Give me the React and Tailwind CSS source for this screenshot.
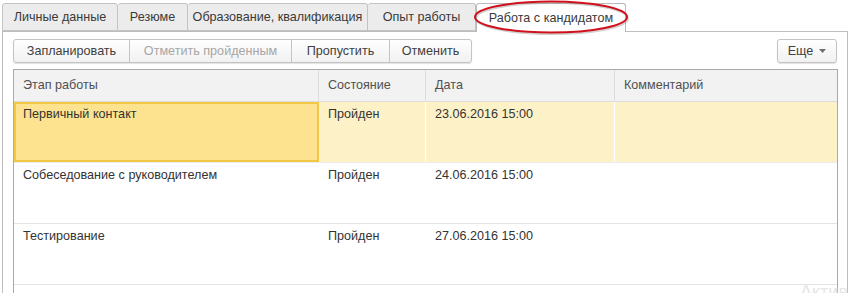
import React from "react";

const tabs = [
  { label: "Личные данные", w: 116 },
  { label: "Резюме", w: 70 },
  { label: "Образование, квалификация", w: 180 },
  { label: "Опыт работы", w: 108 },
];

const rows = [
  { stage: "Первичный контакт", state: "Пройден", date: "23.06.2016 15:00", comment: "" },
  { stage: "Собеседование с руководителем", state: "Пройден", date: "24.06.2016 15:00", comment: "" },
  { stage: "Тестирование", state: "Пройден", date: "27.06.2016 15:00", comment: "" },
];

const Tab = ({ label, w, active }) => (
  <div
    className={
      active
        ? "h-[29px] -mb-px bg-white border border-[#b9b9b9] border-b-0 rounded-t-[3px] flex items-center justify-center text-[#3a3a3a] relative z-10 whitespace-nowrap"
        : "h-[28px] bg-[#ececec] border border-[#c3c3c3] border-l-0 first:border-l rounded-t-[3px] flex items-center justify-center text-[#3a3a3a] whitespace-nowrap"
    }
    style={{ width: w }}
  >
    {label}
  </div>
);

const App = () => {
  return (
    <div
      className="relative w-[852px] h-[293px] overflow-hidden bg-white text-[12.6px] text-[#404040]"
      style={{ fontFamily: '"Liberation Sans", Arial, sans-serif' }}
    >
      <div className="flex items-end pl-[2px] pt-[2px] h-[31px]">
        {tabs.map((t) => (
          <Tab key={t.label} label={t.label} w={t.w} />
        ))}
        <Tab label="Работа с кандидатом" w={150} active />
      </div>

      <div className="ml-[2px] w-[846px] h-[270px] border border-[#bdbdbd] border-b-0 px-[10px] pt-[7px]">
        <div className="flex justify-between h-[24px]">
          <div className="flex border border-[#c4c4c4] rounded-[3px] shadow-[0_1px_1px_rgba(0,0,0,0.12)] bg-gradient-to-b from-white to-[#f1f1f1] overflow-hidden">
            <div className="w-[116px] flex items-center justify-center border-r border-[#c4c4c4] text-[#404040]">
              Запланировать
            </div>
            <div className="w-[162px] flex items-center justify-center border-r border-[#c4c4c4] text-[#a6a6a6]">
              Отметить пройденным
            </div>
            <div className="w-[98px] flex items-center justify-center border-r border-[#c4c4c4] text-[#404040]">
              Пропустить
            </div>
            <div className="w-[81px] flex items-center justify-center text-[#404040]">
              Отменить
            </div>
          </div>
          <div className="w-[60px] flex items-center justify-center gap-[6px] border border-[#c4c4c4] rounded-[3px] shadow-[0_1px_1px_rgba(0,0,0,0.12)] bg-gradient-to-b from-white to-[#f1f1f1] text-[#404040]">
            <span>Еще</span>
            <svg width="7" height="4" viewBox="0 0 7 4">
              <path d="M0 0h7L3.5 4z" fill="#707070" />
            </svg>
          </div>
        </div>

        <div className="mt-[6px] w-[825px] h-[240px] border border-[#a9a9a9] border-b-0">
          <div className="grid grid-cols-[305px_107px_189px_1fr] h-[32px] bg-[#f2f2f2] border-b border-[#dcdcdc] text-[#505050]">
            <div className="flex items-center pl-[9px] border-r border-[#dcdcdc]">Этап работы</div>
            <div className="flex items-center pl-[9px] border-r border-[#dcdcdc]">Состояние</div>
            <div className="flex items-center pl-[9px] border-r border-[#dcdcdc]">Дата</div>
            <div className="flex items-center pl-[9px]">Комментарий</div>
          </div>

          {rows.map((r, i) => {
            const sel = i === 0;
            return (
              <div
                key={r.stage}
                className={
                  sel
                    ? "grid grid-cols-[305px_107px_189px_1fr] h-[61px] bg-[#fdf1c8] border-b border-[#ececec] text-[#333]"
                    : "grid grid-cols-[305px_107px_189px_1fr] h-[61px] border-b border-[#e3e3e3] text-[#333]"
                }
              >
                <div
                  className={
                    sel
                      ? "pl-[7px] pt-[1px] bg-[#fde38f] border-2 border-[#f2c744]"
                      : "pl-[9px] pt-[3px]"
                  }
                >
                  {r.stage}
                </div>
                <div className={sel ? "pl-[9px] pt-[3px] border-r border-white" : "pl-[9px] pt-[3px]"}>
                  {r.state}
                </div>
                <div className={sel ? "pl-[9px] pt-[3px] border-r border-white" : "pl-[9px] pt-[3px]"}>
                  {r.date}
                </div>
                <div className="pl-[9px] pt-[3px]">{r.comment}</div>
              </div>
            );
          })}
        </div>
      </div>

      <div className="absolute left-[800px] top-[283px] text-[18px] text-[#e6e6e6] leading-none">
        Актив
      </div>

      <svg
        className="absolute left-[470px] top-0 z-20 pointer-events-none"
        width="164"
        height="38"
        viewBox="0 0 164 38"
      >
        <ellipse cx="82" cy="18.5" rx="76" ry="15.5" fill="none" stroke="#9a9a9a" strokeOpacity="0.45" strokeWidth="2" />
        <ellipse cx="81" cy="17" rx="76" ry="15.5" fill="none" stroke="#d0101c" strokeWidth="2" />
      </svg>
    </div>
  );
};

export default App;
